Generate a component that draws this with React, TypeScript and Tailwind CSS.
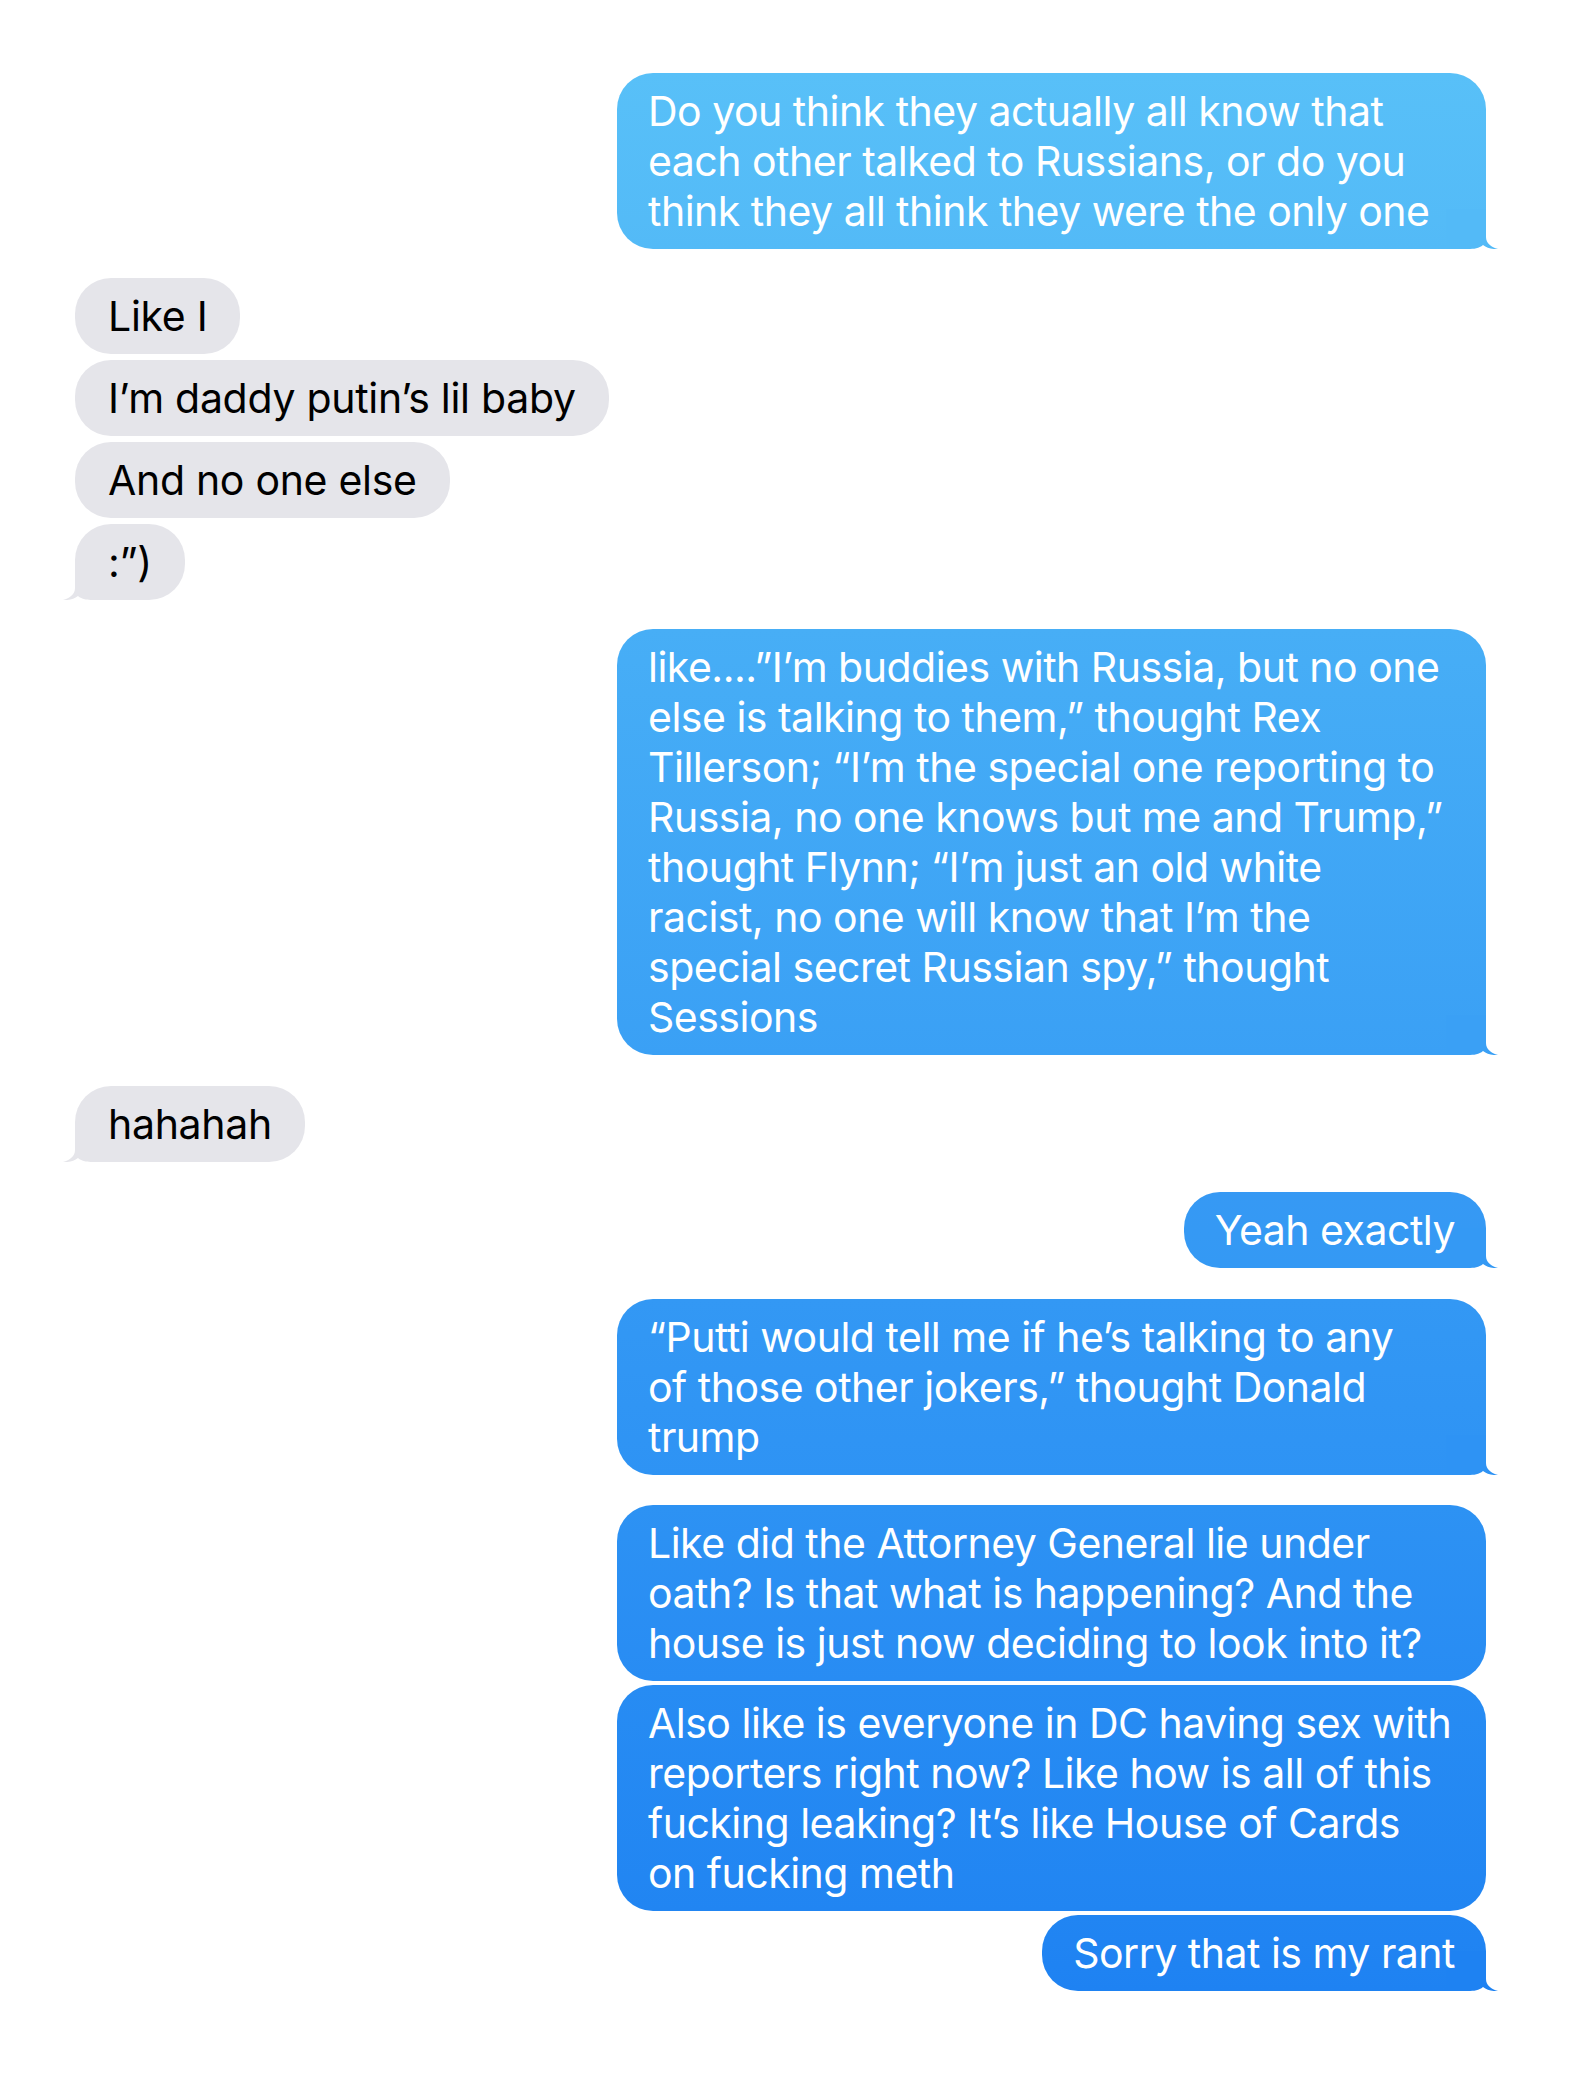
import React from "react";

function TailRight({ fill }: { fill: string }) {
  return (
    <svg
      className="absolute bottom-0 right-[-12px] w-[52px] h-[40px]"
      viewBox="0 0 52 40"
      aria-hidden="true"
    >
      <path
        className={fill}
        d="M0 0H40V28C40 34 45 38 52 40C46 40.5 41 39 37 36C33 39.5 28 40 22 40H0Z"
      />
    </svg>
  );
}

function TailLeft() {
  return (
    <svg
      className="absolute bottom-0 left-[-12px] w-[52px] h-[40px]"
      viewBox="0 0 52 40"
      aria-hidden="true"
    >
      <path
        className="fill-[#e5e5ea]"
        d="M52 0H12V28C12 34 7 38 0 40C6 40.5 11 39 15 36C19 39.5 24 40 30 40H52Z"
      />
    </svg>
  );
}

const blue =
  "relative rounded-[36px] px-[31px] py-[13px] text-white leading-[50px] whitespace-nowrap tracking-[-0.5px]";
const gray =
  "relative rounded-[36px] px-[33px] py-[13px] text-black leading-[50px] whitespace-nowrap bg-[#e5e5ea] tracking-[-0.3px]";

function T({ children }: { children: React.ReactNode }) {
  return <span className="relative z-10">{children}</span>;
}

export default function App() {
  return (
    <div
      className="min-h-[2076px] bg-white pl-[75px] pr-[98px] pt-[73px] flex flex-col text-[41px]"
      style={{ fontFamily: "Inter, 'Noto Sans', 'Liberation Sans', sans-serif" }}
    >
      {/* Outgoing 1 */}
      <div className="flex flex-col items-end">
        <div className={`${blue} w-[869px] bg-gradient-to-b from-[#58c0f8] to-[#53baf7]`}>
          <T>
            Do you think they actually all know that
            <br />
            each other talked to Russians, or do you
            <br />
            think they all think they were the only one
          </T>
          <TailRight fill="fill-[#53baf7]" />
        </div>
      </div>

      {/* Incoming group */}
      <div className="mt-[29px] flex flex-col items-start gap-[6px]">
        <div className={gray}>
          <T>Like I</T>
        </div>
        <div className={gray}>
          <T>I’m daddy putin’s lil baby</T>
        </div>
        <div className={gray}>
          <T>And no one else</T>
        </div>
        <div className={gray}>
          <T>:”)</T>
          <TailLeft />
        </div>
      </div>

      {/* Outgoing 2 */}
      <div className="mt-[29px] flex flex-col items-end">
        <div className={`${blue} w-[869px] bg-gradient-to-b from-[#47aef6] to-[#3aa0f5]`}>
          <T>
            like....”I’m buddies with Russia, but no one
            <br />
            else is talking to them,” thought Rex
            <br />
            Tillerson; “I’m the special one reporting to
            <br />
            Russia, no one knows but me and Trump,”
            <br />
            thought Flynn; “I’m just an old white
            <br />
            racist, no one will know that I’m the
            <br />
            special secret Russian spy,” thought
            <br />
            Sessions
          </T>
          <TailRight fill="fill-[#3aa0f5]" />
        </div>
      </div>

      {/* Incoming */}
      <div className="mt-[31px] flex flex-col items-start">
        <div className={gray}>
          <T>hahahah</T>
          <TailLeft />
        </div>
      </div>

      {/* Outgoing */}
      <div className="mt-[30px] flex flex-col items-end">
        <div className={`${blue} bg-gradient-to-b from-[#3699f4] to-[#3499f4]`}>
          <T>Yeah exactly</T>
          <TailRight fill="fill-[#3499f4]" />
        </div>
      </div>

      <div className="mt-[31px] flex flex-col items-end">
        <div className={`${blue} w-[869px] bg-gradient-to-b from-[#3398f4] to-[#2e93f4]`}>
          <T>
            “Putti would tell me if he’s talking to any
            <br />
            of those other jokers,” thought Donald
            <br />
            trump
          </T>
          <TailRight fill="fill-[#2e93f4]" />
        </div>
      </div>

      <div className="mt-[30px] flex flex-col items-end gap-[4px]">
        <div className={`${blue} w-[869px] bg-gradient-to-b from-[#2d92f3] to-[#288cf3]`}>
          <T>
            Like did the Attorney General lie under
            <br />
            oath? Is that what is happening? And the
            <br />
            house is just now deciding to look into it?
          </T>
        </div>
        <div className={`${blue} w-[869px] bg-gradient-to-b from-[#278cf3] to-[#2185f2]`}>
          <T>
            Also like is everyone in DC having sex with
            <br />
            reporters right now? Like how is all of this
            <br />
            fucking leaking? It’s like House of Cards
            <br />
            on fucking meth
          </T>
        </div>
        <div className={`${blue} bg-gradient-to-b from-[#2185f2] to-[#1e82f2]`}>
          <T>Sorry that is my rant</T>
          <TailRight fill="fill-[#1e82f2]" />
        </div>
      </div>
    </div>
  );
}
